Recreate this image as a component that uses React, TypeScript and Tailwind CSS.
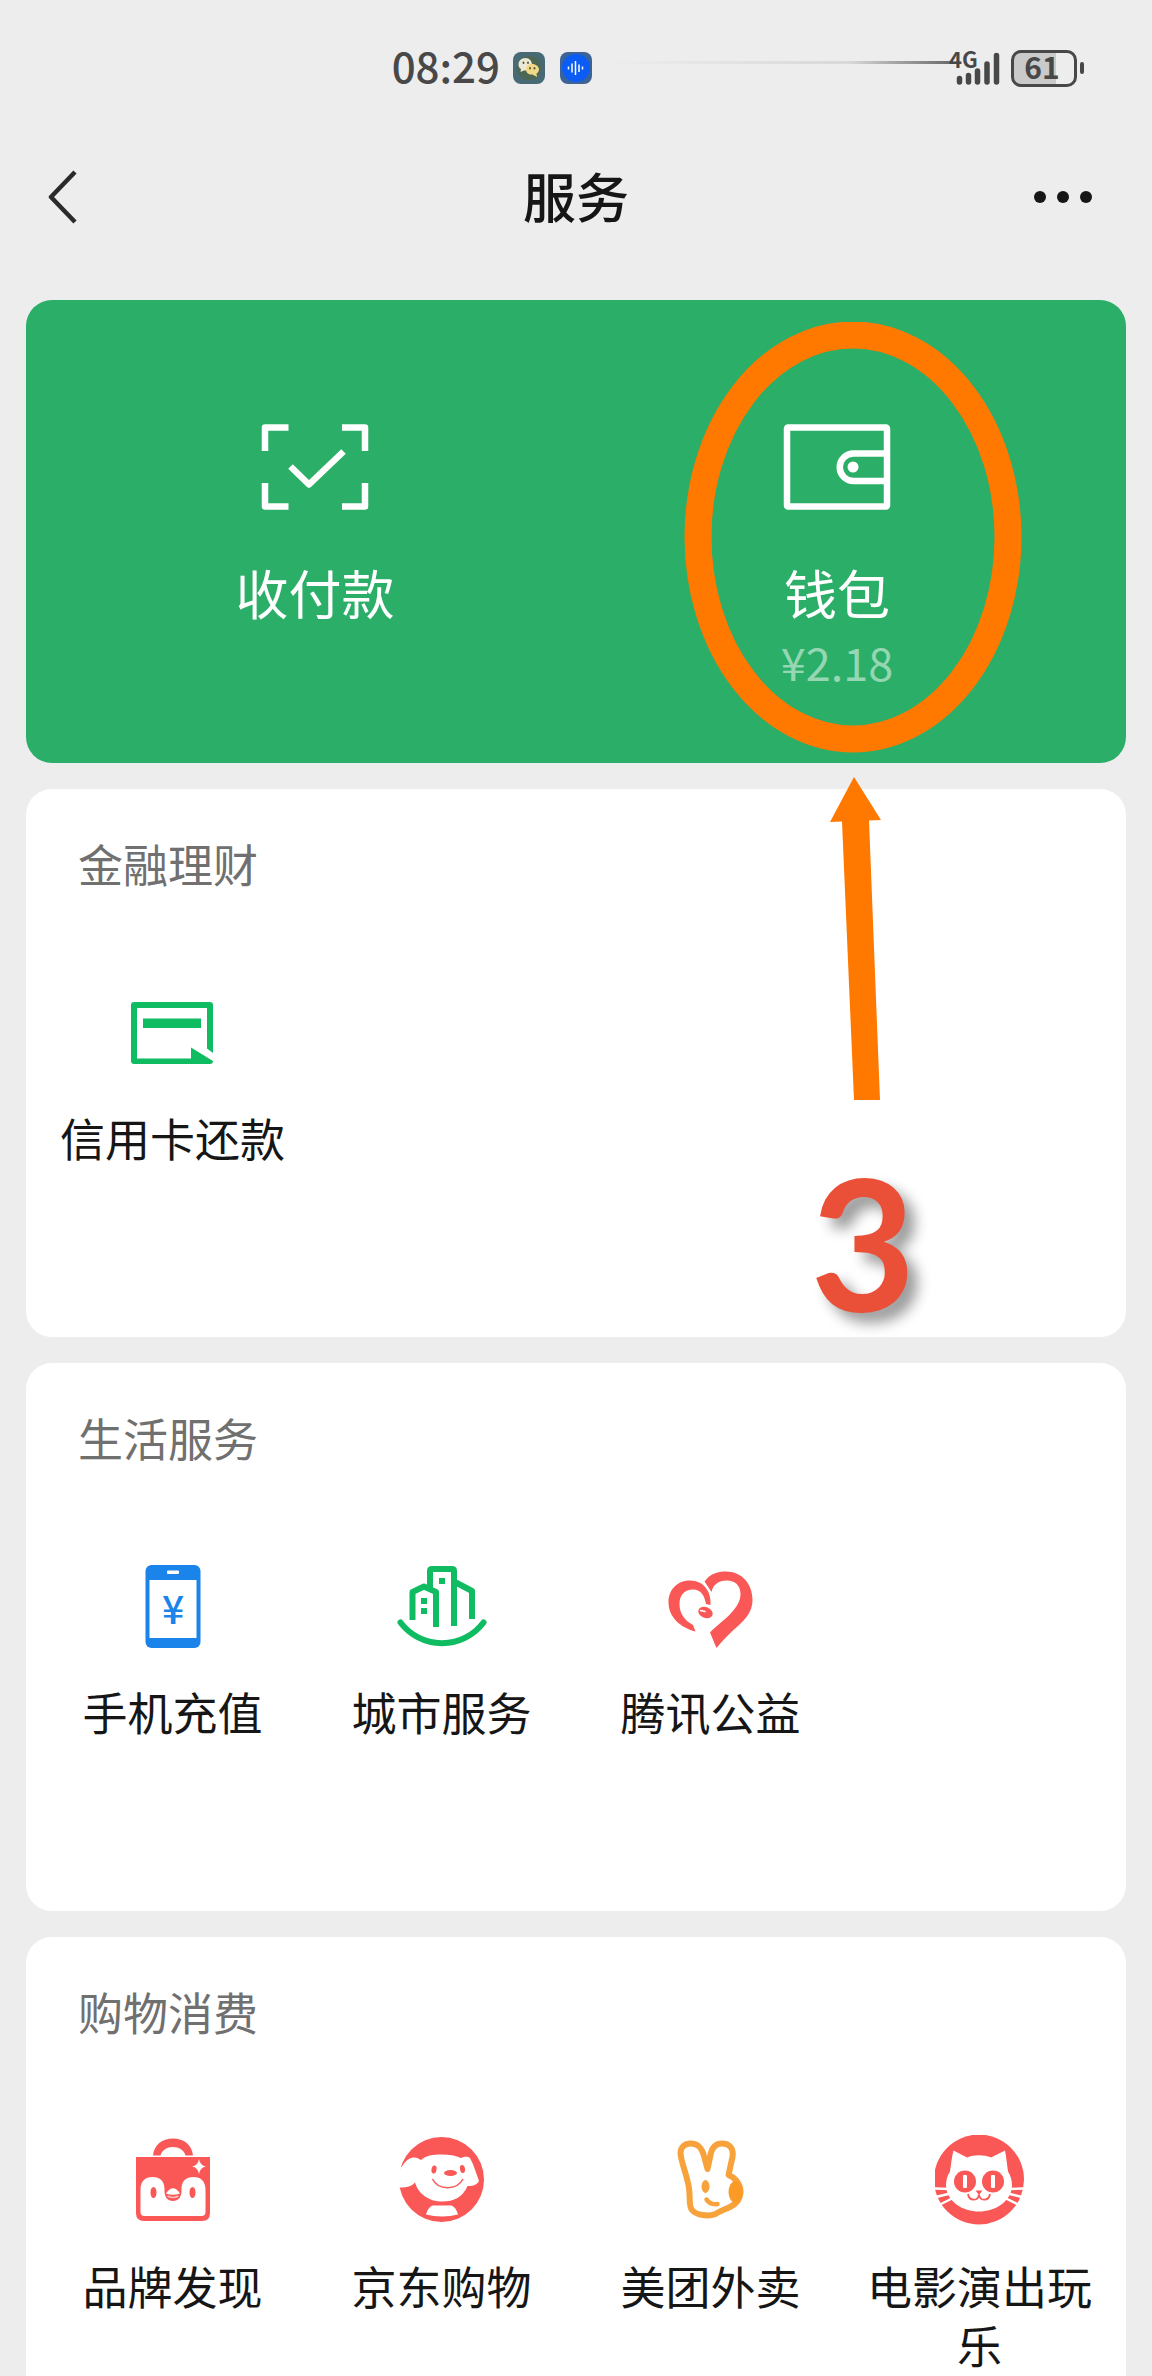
import type { ReactNode } from "react";

type Service = {
  name: string;
  icon: ReactNode;
};

type Section = {
  title: string;
  items: Service[];
};

const RED = "#fa5757";
const GREEN = "#10bc62";
const BLUE = "#1a84ea";
const ORANGE = "#f7a23b";

function ServiceIcon({ children }: { children: ReactNode }) {
  return (
    <svg width="90" height="90" viewBox="0 0 90 90" fill="none" aria-hidden="true">
      {children}
    </svg>
  );
}

const CreditCardIcon = (
  <ServiceIcon>
    <path
      fill={GREEN}
      fillRule="evenodd"
      d="M6 15H82Q85 15 85 18V66L79 61.500V21H9V71.500H63V60.500L85 74Q85 77 82 77H6Q3 77 3 74V18Q3 15 6 15Z"
    />
    <path fill={GREEN} d="M15 31.500H73V41H15Z" />
  </ServiceIcon>
);

const PhoneIcon = (
  <ServiceIcon>
    <rect x="17.500" y="4" width="55" height="83" rx="6" fill={BLUE} />
    <rect x="21.500" y="19" width="47" height="58" fill="#fff" />
    <rect x="39" y="9.500" width="12" height="3.500" rx="1" fill="#fff" />
    <text
      x="45"
      y="63"
      textAnchor="middle"
      fontSize="39"
      fontWeight="500"
      fontFamily="'Noto Sans CJK SC', sans-serif"
      fill={BLUE}
    >
      ¥
    </text>
  </ServiceIcon>
);

const CityIcon = (
  <ServiceIcon>
    <g stroke={GREEN} strokeWidth="6" strokeLinejoin="round">
      <path d="M3.500 61.500A52 52 0 0 0 86.500 61.500" strokeLinecap="round" />
      <path d="M15.500 59V31L27 25.500L39 31V66" />
      <path d="M33 27V10Q33 8 35 8H55Q57 8 57 10V65" />
      <path d="M57 20.500L75 30V58" />
    </g>
    <path fill={GREEN} d="M24 37H30V43H24ZM24 47H30V53H24ZM42 17H48V23H42Z" />
  </ServiceIcon>
);

const HeartIcon = (
  <ServiceIcon>
    <path
      fill={RED}
      d="M44.500 44C45.500 31 38 19.500 24 19.500C10 19.500 2.500 30 2.500 41C2.500 56 14 66.500 29.500 70.500L27 64C18 59 13.500 52 13.500 43C13.500 34 18.500 28.500 27 28.500C35.500 28.500 38.500 35.500 40 43Z"
    />
    <path
      fill={RED}
      d="M38.500 20.500C44 13 51 10.500 60 10.500C76 10.500 86.500 23 86.500 39C86.500 50 80 58 72 65C65 71 57 79 50.500 87L44 71.500C50 65 59 59 66 51C71 45.500 74.500 40 74.500 33C74.500 24.500 69 19.500 61 19.500C52 19.500 47 24 45.500 31Z"
    />
    <ellipse cx="39.500" cy="51.500" rx="7.500" ry="5.500" transform="rotate(22 39.500 51.500)" fill={RED} />
    <path d="M34.500 49.500L39 50.500" stroke="#fff" strokeWidth="1.500" strokeLinecap="round" />
  </ServiceIcon>
);

const BagIcon = (
  <ServiceIcon>
    <path fill={RED} d="M25 20.500C26 10 34 3.500 45 3.500C56 3.500 64 10 65 20.500H57.500C56 15 51 12 45 12C39 12 34 15 32.500 20.500Z" />
    <path fill={RED} d="M8 22H82V78Q82 86 74 86H16Q8 86 8 78Z" />
    <path
      fill="#fff"
      d="M12.500 55C12.500 46 17 42 24.500 42C32 42 36.500 46 36.500 54C36 62 39.500 66 45 66C50.500 66 54 62 53.500 54C53.500 46 58 42 65.500 42C73 42 77.500 46 77.500 55V77Q77.500 81 73.500 81H16.500Q12.500 81 12.500 77Z"
    />
    <ellipse cx="25.500" cy="57.500" rx="3" ry="5.500" fill={RED} />
    <ellipse cx="64.500" cy="57.500" rx="3" ry="5.500" fill={RED} />
    <path fill="#fff" d="M38 58.500Q45 48 52 58.500Q45 61 38 58.500Z" />
    <path d="M39.500 61Q45 64 50.500 61" stroke="#fff" strokeWidth="1.500" opacity="0.600" />
    <path fill="#fff" d="M71 24Q72 30.500 78 31.500Q72 32.500 71 39Q70 32.500 64 31.500Q70 30.500 71 24Z" />
  </ServiceIcon>
);

const DogIcon = (
  <ServiceIcon>
    <circle cx="44.500" cy="44.500" r="42.500" fill={RED} />
    <path
      fill="#fff"
      d="M0 37C4 35 8 23 16 22.500C19 22 22 23.500 24 25C29 20.500 36 19.500 44.500 19.500C52 19.500 59 20.500 64 23C67 21.500 71 21 73 23C77 30 79 38 82 46C80 50 75 51.500 70.500 51C66 62 57 66.500 45 66.500C32 66.500 21 59 18 47.500C14 52 8 53 0 52.500Z"
    />
    <path fill="#fff" d="M35.500 70.500H54.500C58.500 72.500 60 76 61 79.500C51 82 39 82 29 79.500C30 76 31.500 72.500 35.500 70.500Z" />
    <ellipse cx="37" cy="34.500" rx="2.500" ry="4" transform="rotate(10 37 34.500)" fill={RED} />
    <ellipse cx="65.500" cy="34" rx="2.500" ry="4" transform="rotate(-10 65.500 34)" fill={RED} />
    <ellipse cx="53.500" cy="38" rx="6.500" ry="3" fill={RED} />
    <path d="M35.500 44C41 55.500 60 55.500 66 44" stroke={RED} strokeWidth="1.500" />
  </ServiceIcon>
);

const RabbitIcon = (
  <ServiceIcon>
    <path
      stroke={ORANGE}
      strokeWidth="6"
      strokeLinejoin="round"
      d="M15 22C13 13 18 8.500 25 8.500C33 8.500 36 14 38 21L41.500 34L44.500 20C46 12 50 8.500 56 8.500C63 8.500 68 13 66.500 22L62.500 40C70 43 75 50 74.500 58C74 65 70 69 64 72C58 75 54 76 49.500 79C42 82 30 80 26 75C22 70 25 62 22.500 50C20 38 17 32 15 22Z"
    />
    <ellipse cx="69.500" cy="57" rx="7" ry="11" fill="#fb9a27" />
    <ellipse cx="39.500" cy="51.500" rx="4" ry="6.500" fill={ORANGE} />
    <path d="M40.500 64.500Q44 70 51.500 69" stroke={ORANGE} strokeWidth="4.500" strokeLinecap="round" />
  </ServiceIcon>
);

const CatIcon = (
  <ServiceIcon>
    <circle cx="44" cy="44.500" r="45" fill={RED} />
    <path
      fill="#fff"
      d="M18.500 15.500L32 22.500C39 19.500 49 19.500 56 22.500L70 15.500C71.500 23 72 30 73 36.500C76 41 77 46 77 51C76 67 60 76.500 44 76.500C28 76.500 12 67 11 51C11 46 12 41 15 36.500C16 30 16.500 23 18.500 15.500Z"
    />
    <path
      d="M-1 53.500L14 54M1 62L15 58.500M5 69.500L18 63M89 53.500L74 54M87 62L73 58.500M83 69.500L70 63"
      stroke="#fff"
      strokeWidth="2.500"
    />
    <circle cx="30" cy="46.500" r="11" fill={RED} />
    <circle cx="58" cy="46.500" r="11" fill={RED} />
    <rect x="28" y="40" width="4" height="13" rx="1" fill="#fff" />
    <rect x="56" y="40" width="4" height="13" rx="1" fill="#fff" />
    <path fill={RED} d="M40.500 55.500H47.500L44 60Z" />
    <path d="M33 59C34 66 43 67 44 59.500C45 67 54 66 55 59" stroke={RED} strokeWidth="1.800" />
  </ServiceIcon>
);

const sections: Section[] = [
  {
    title: "金融理财",
    items: [{ name: "信用卡还款", icon: CreditCardIcon }],
  },
  {
    title: "生活服务",
    items: [
      { name: "手机充值", icon: PhoneIcon },
      { name: "城市服务", icon: CityIcon },
      { name: "腾讯公益", icon: HeartIcon },
    ],
  },
  {
    title: "购物消费",
    items: [
      { name: "品牌发现", icon: BagIcon },
      { name: "京东购物", icon: DogIcon },
      { name: "美团外卖", icon: RabbitIcon },
      { name: "电影演出玩乐", icon: CatIcon },
    ],
  },
];

function StatusBar() {
  return (
    <div className="flex h-[136px] shrink-0 items-center pl-[34%] pr-[68px] text-[#484848]">
      <span className="pb-1.5 text-[42px] font-medium leading-none">08:29</span>
      <div className="ml-[13px] flex gap-[15px]">
        <svg width="32" height="32" viewBox="0 0 32 32" aria-hidden="true">
          <rect width="32" height="32" rx="8" fill="#476a75" />
          <circle cx="16" cy="16" r="12" fill="#52653f" opacity="0.600" />
          <path fill="#ece8d4" d="M12.500 6C8 6 5.500 9 5.500 12.500C5.500 14.500 6.500 16 8 17L7.500 20L11 18.500C16 19 19 16 19 12.500C19 9 16.500 6 12.500 6Z" />
          <path fill="#f2d987" d="M19 12C15 12 13 14.500 13 17.500C13 21 16 23 19.500 22.500L24 25L23.500 21.500C25 20.500 26 19 26 17.500C26 14.500 23 12 19 12Z" />
          <path stroke="#4c5534" strokeWidth="1.800" strokeLinecap="round" d="M10.500 10.500V11M15 10.500V11M17 16V16.500M21.500 16V16.500" />
        </svg>
        <svg width="32" height="32" viewBox="0 0 32 32" aria-hidden="true">
          <rect width="32" height="32" rx="8" fill="#3c6397" />
          <circle cx="16" cy="16" r="14" fill="#0b5cf5" />
          <path stroke="#fff" strokeWidth="1.500" d="M8.500 14.500V17.500M12 11.500V20.500M15.500 9V23M19 12.500V20M22.500 14.500V17.500" />
        </svg>
      </div>
      <div className="mb-3 ml-4 h-[3px] flex-1 bg-linear-to-r from-transparent via-[#d8d8d8] via-70% to-[#6a6a6a]" />
      <div className="relative -ml-1 h-[38px] w-[54px]">
        <span className="absolute left-0 top-0 text-[22px] font-bold leading-[18px]">4G</span>
        <svg className="absolute right-0 top-0" width="48" height="38" viewBox="0 0 48 38" aria-hidden="true">
          <path
            stroke="currentColor"
            strokeWidth="5.500"
            strokeLinecap="round"
            d="M4.500 29.500V33M13.500 26.500V33M22.500 22V33M32 15V33M41.500 6.500V33"
          />
        </svg>
      </div>
      <div className="ml-2 flex items-center gap-[3px]">
        <div className="flex h-[37px] w-[66px] items-center justify-center rounded-[10px] border-3 border-current bg-linear-to-r from-[#cacaca] from-70% to-transparent to-70% pb-1 pr-1 text-[30px] font-bold leading-none">
          61
        </div>
        <div className="h-3 w-1 rounded-full bg-current" />
      </div>
    </div>
  );
}

function NavBar() {
  return (
    <header className="flex h-[122px] shrink-0 items-center justify-between px-12 text-[#161616]">
      <button type="button" aria-label="返回" className="w-[70px]">
        <svg width="30" height="56" viewBox="0 0 30 56" fill="none" aria-hidden="true">
          <path d="M27 3L3 28L27 53" stroke="#2a2a2a" strokeWidth="4.500" strokeLinejoin="round" />
        </svg>
      </button>
      <h1 className="pb-1 text-[53px] font-medium leading-none">服务</h1>
      <button type="button" aria-label="更多" className="flex w-[70px] justify-end gap-[11px] pr-3">
        <i className="size-3 rounded-full bg-current" />
        <i className="size-3 rounded-full bg-current" />
        <i className="size-3 rounded-full bg-current" />
      </button>
    </header>
  );
}

function PayCard() {
  return (
    <section className="grid grid-cols-2 items-start rounded-[26px] bg-[#2bae67] px-7 pb-[69px] pt-[123px] text-white">
      <button type="button" className="flex flex-col items-center">
        <svg width="108" height="88" viewBox="0 0 108 88" fill="none" aria-hidden="true">
          <g stroke="currentColor" strokeWidth="6.500" strokeLinejoin="round">
            <path d="M27.500 4.500H4V28M81 4.500H104V28M27.500 83.500H4V60M81 83.500H104V60" />
            <path d="M29.500 43.500L48 61.500L82.500 28.500" />
          </g>
        </svg>
        <span className="mt-[49px] text-[53px] leading-[64px]">收付款</span>
      </button>
      <button type="button" className="relative flex flex-col items-center">
        <svg width="108" height="88" viewBox="0 0 108 88" fill="none" aria-hidden="true">
          <g stroke="currentColor" strokeWidth="6.500" strokeLinejoin="round">
            <rect x="4" y="4.500" width="100" height="79" rx="1" />
            <path d="M104 30.500H70.500A13.500 13.500 0 0 0 70.500 58H104" />
          </g>
          <circle cx="70" cy="44" r="5.500" fill="currentColor" />
        </svg>
        <span className="mt-[49px] text-[53px] leading-[64px]">钱包</span>
        <span className="mt-1.5 text-[45px] leading-[64px] text-white/50">¥2.18</span>
        <Marker />
      </button>
    </section>
  );
}

// ring round the wallet, with the arrow and the step number under it
function Marker() {
  return (
    <div className="pointer-events-none absolute -top-[101px] left-1/2 -ml-[153px] w-[338px]">
      <svg width="338" height="780" viewBox="0 0 338 780" fill="none" aria-hidden="true">
        <ellipse cx="169" cy="215" rx="155" ry="202" stroke="#ff7800" strokeWidth="27" />
        <path fill="#ff7800" d="M170 455L197 498L185 498.500L196 778H170L158 499.500L146 500Z" />
      </svg>
      <div className="mt-[50px] pl-5 text-center font-['Lato',sans-serif] text-[182px] font-bold leading-[180px] text-[#ea5038] [text-shadow:10px_10px_14px_rgba(0,0,0,0.4)]">
        3
      </div>
    </div>
  );
}

function ServiceSection({ title, items }: Section) {
  return (
    <section className="rounded-[26px] bg-white px-3 pb-[111px] pt-[45px]">
      <h2 className="px-10 text-[45px] leading-[60px] text-[#707070]">{title}</h2>
      <div className="mt-[93px] grid grid-cols-4">
        {items.map((item) => (
          <button key={item.name} type="button" className="flex flex-col items-center px-4">
            {item.icon}
            <span className="mt-[31px] min-h-[118px] text-[45px] leading-[59px]">{item.name}</span>
          </button>
        ))}
      </div>
    </section>
  );
}

export default function App() {
  return (
    <div className="flex h-screen flex-col overflow-hidden bg-[#ededed] font-['Noto_Sans_CJK_SC',sans-serif] text-[#161616]">
      <StatusBar />
      <NavBar />
      <main className="mt-[42px] flex min-h-0 flex-1 flex-col gap-[26px] overflow-x-hidden overflow-y-auto px-[26px] [scrollbar-width:none] *:shrink-0">
        <div className="relative z-10">
          <PayCard />
        </div>
        {sections.map((section) => (
          <ServiceSection key={section.title} {...section} />
        ))}
      </main>
    </div>
  );
}
